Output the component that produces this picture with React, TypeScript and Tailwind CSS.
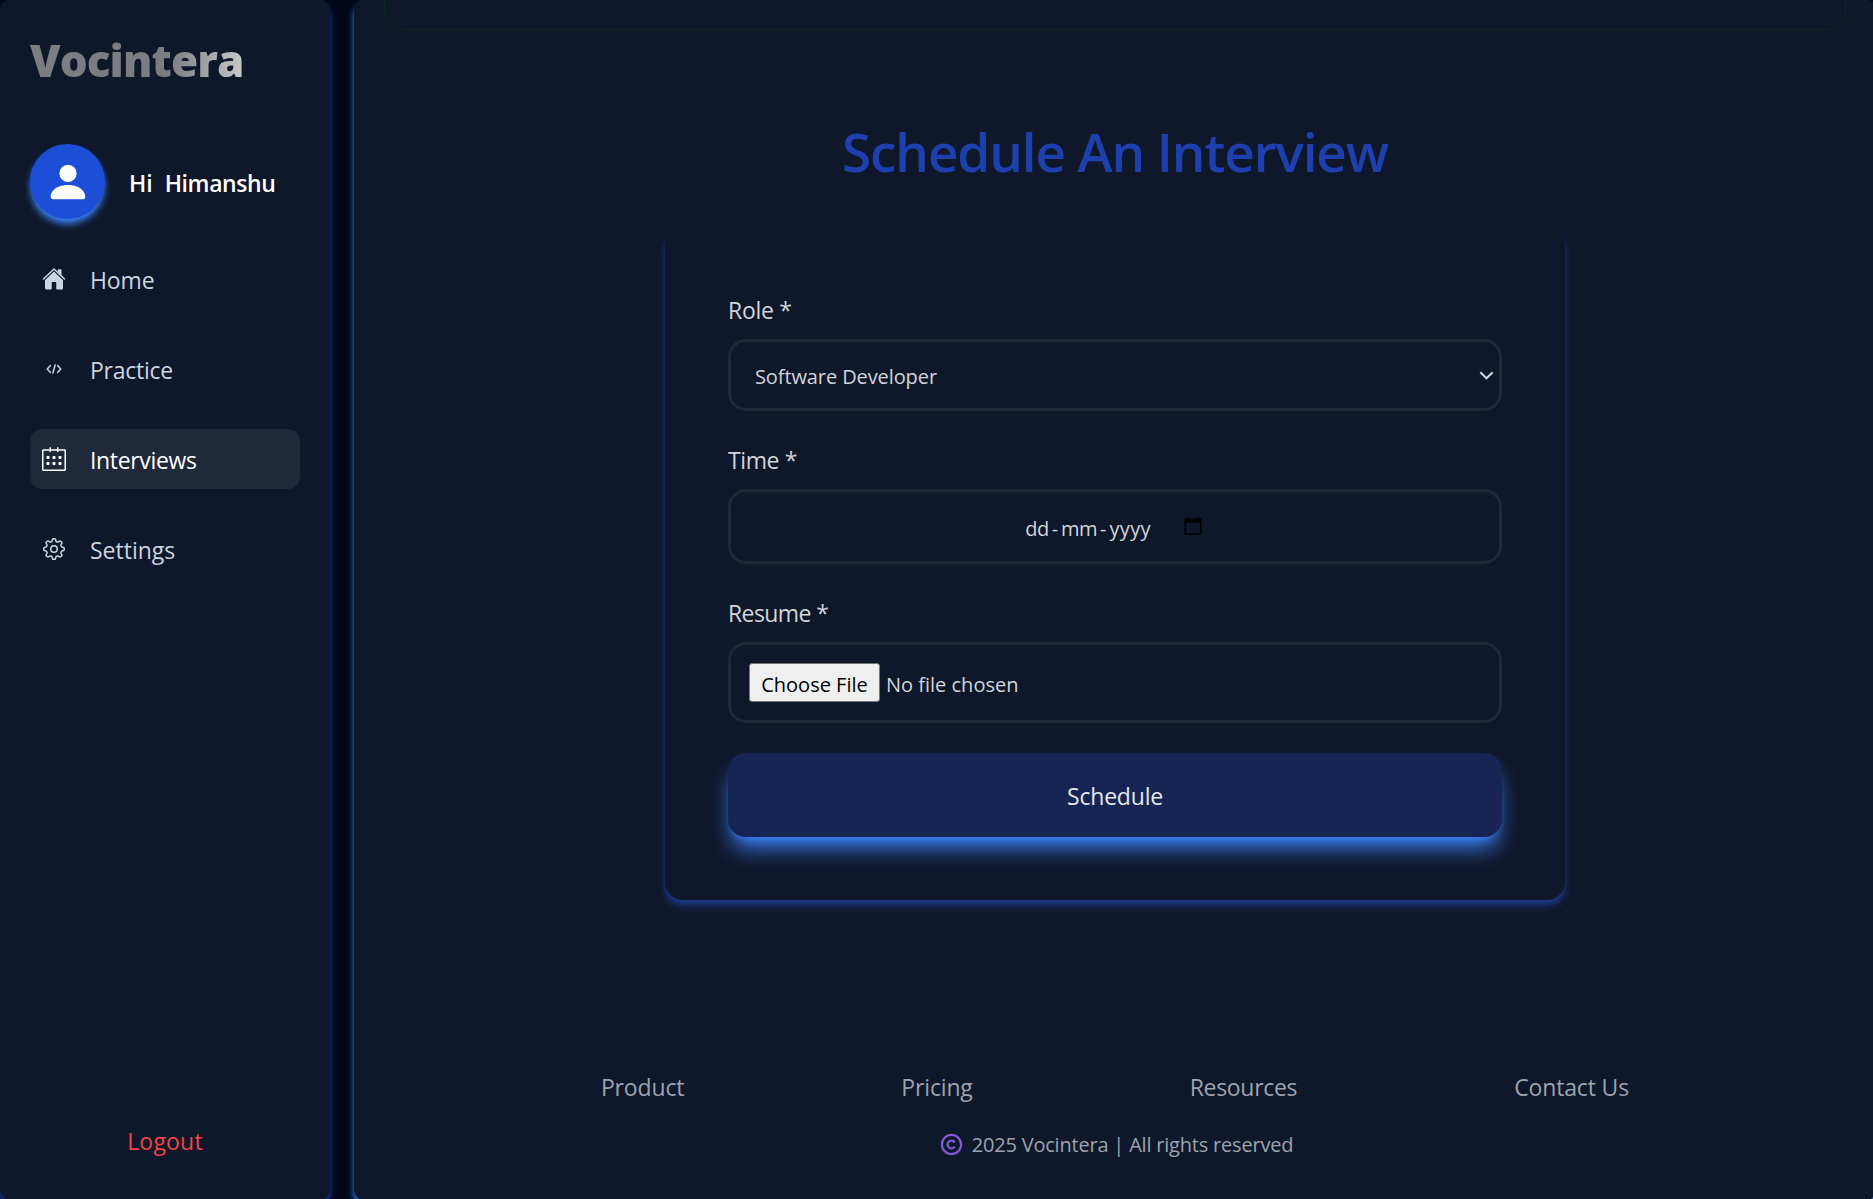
import React from 'react';
import type { ReactNode } from 'react';
import { IoHome } from 'react-icons/io5';
import { GoGear } from 'react-icons/go';
import { BsPersonFill } from 'react-icons/bs';
import { SlCalender } from 'react-icons/sl';
import { LuCopyright } from 'react-icons/lu';

function CodeIcon() {
  return (
    <svg width="24" height="24" viewBox="0 0 24 24" fill="none" stroke="currentColor" strokeWidth="1.5" strokeLinecap="round" strokeLinejoin="round">
      <path d="M8.4 8.6 5.3 12l3.1 3.4M15.6 8.6l3.1 3.4-3.1 3.4M13.2 8l-2.4 8" />
    </svg>
  );
}

function DateIcon() {
  return (
    <svg width="20" height="21" viewBox="0 0 20 21" fill="none" stroke="#000" strokeWidth="1.6">
      <path d="M2.3 3.4h15.4v14.9H2.3z" strokeLinejoin="round" />
      <path d="M2 5h16" strokeWidth="3.6" />
      <path d="M5 1v3M15 1v3" />
    </svg>
  );
}

function NavItem({ icon, label, active, tracking = '' }: { icon: ReactNode; label: string; active?: boolean; tracking?: string }) {
  return (
    <a className={`flex h-[60px] items-center rounded-xl pl-3 ${active ? 'bg-[#1f293a] text-white' : 'text-[#cbd5e1]'}`}>
      <span className="flex w-6 justify-center">{icon}</span>
      <span className={`ml-6 pt-0.5 text-[23px] leading-9 ${tracking}`}>{label}</span>
    </a>
  );
}

function Field({ label, className, tracking = '', children }: { label: string; className: string; tracking?: string; children: ReactNode }) {
  return (
    <div className="mb-[30px]">
      <div className={`mb-3 h-9 pt-px text-[23px] leading-9 ${tracking}`}>{label}</div>
      <div className={`flex items-center rounded-[18px] border-[3px] border-[#1f2937] text-[20px] leading-[30px] ${className}`}>{children}</div>
    </div>
  );
}

export default function App() {
  return (
    <div className="h-[1199px] w-full overflow-hidden bg-[#020617] font-['Open_Sans','Noto_Sans',sans-serif]">
      <div className="-mt-px flex h-[1202px] gap-6">
        <aside className="flex w-[330px] shrink-0 flex-col rounded-xl bg-[#0f172a] px-[30px] pb-[31px] shadow-[0_6px_9px_-1.5px_#1e40af,0_3px_6px_-3px_#1e40af]">
          <div className="mt-[31px] h-[60px]">
            <span className="inline-block bg-linear-to-r from-[#7b7d83] from-65% to-[#c8c8c8] bg-clip-text text-[44px] leading-[60px] font-black tracking-[-0.9px] text-transparent">
              Vocintera
            </span>
          </div>
          <div className="mt-[54px] flex items-center">
            <div className="flex size-[75px] items-center justify-center rounded-full bg-[#1d4ed8] text-white shadow-[0_6px_9px_-1.5px_#3b82f6,0_3px_6px_-3px_#3b82f6]">
              <BsPersonFill size={46} />
            </div>
            <div className="ml-6 flex gap-3 pt-0.5 text-[23px] leading-9 font-semibold text-white">
              <span>Hi</span>
              <span className="tracking-[-0.4px]">Himanshu</span>
            </div>
          </div>
          <nav className="mt-[30px] flex flex-col gap-[30px]">
            <NavItem icon={<IoHome size={24} />} label="Home" tracking="tracking-[-0.1px]" />
            <NavItem icon={<CodeIcon />} label="Practice" tracking="tracking-[-0.25px]" />
            <NavItem icon={<SlCalender size={24} />} label="Interviews" active tracking="tracking-[-0.35px]" />
            <NavItem icon={<GoGear size={24} />} label="Settings" />
          </nav>
          <a className="mt-auto mb-[11px] text-center text-[23px] leading-9 tracking-[0.2px] text-[#ef4444]">Logout</a>
        </aside>

        <main className="flex w-[1522px] shrink-0 flex-col rounded-xl bg-[#0f172a] px-[30px] shadow-[0_6px_9px_-1.5px_#3b82f6,0_3px_6px_-3px_#3b82f6]">
          <div className="h-[31px] shrink-0 rounded-b-[18px] border border-t-0 border-[#072a1c]" />
          <h1 className="mt-[92px] text-center text-[53px] leading-[60px] font-semibold tracking-[-1.1px] text-[#1e40af]">Schedule An Interview</h1>

          <form className="mx-auto mt-[46px] w-[900px] rounded-[18px] bg-[#0f172a] p-[63px] text-[#d1d5db] shadow-[0_6px_9px_-1.5px_#1e3a8a,0_3px_6px_-3px_#1e40af]">
            <Field label="Role *" className="h-[72px] justify-between pr-[5px] pl-6" tracking="tracking-[-0.3px]">
              <span className="pt-[3px] tracking-[-0.1px]">Software Developer</span>
              <svg width="15" height="9" viewBox="0 0 15 9" fill="none" stroke="currentColor" strokeWidth="2">
                <path d="M1.3 1.2 7.5 7.3l6.2-6.1" />
              </svg>
            </Field>
            <Field label="Time *" className="h-[75px] justify-center" tracking="tracking-[-0.4px]">
              <div className="flex items-center gap-[3px] pr-0.5">
                <span className="flex gap-[3px] pt-1">
                  <span className="tracking-[-0.5px]">dd</span>
                  <span>-</span>
                  <span className="tracking-[-0.5px]">mm</span>
                  <span>-</span>
                  <span className="tracking-[0.3px]">yyyy</span>
                </span>
                <span className="ml-[29px]">
                  <DateIcon />
                </span>
              </div>
            </Field>
            <Field label="Resume *" className="h-[81px] pl-[18px]" tracking="tracking-[-0.6px]">
              <button type="button" className="h-[39px] w-[131px] rounded-[3px] border border-[#767676] bg-[#efefef] pt-[3px] leading-[35px] text-black">
                Choose File
              </button>
              <span className="ml-1.5 pt-1">No file chosen</span>
            </Field>
            <button
              type="button"
              className="h-[84px] w-full rounded-[18px] bg-[#172554] pt-0.5 text-[23px] leading-9 tracking-[-0.2px] text-[#e5e7eb] shadow-[0_15px_22.5px_-4.5px_#3b82f6,0_6px_9px_-6px_#3b82f6]"
            >
              Schedule
            </button>
          </form>

          <footer className="mt-[169px] text-[#9ca3af]">
            <div className="flex justify-evenly text-[23px] leading-9 tracking-[-0.15px]">
              <a>Product</a>
              <a>Pricing</a>
              <a className="tracking-[-0.3px]">Resources</a>
              <a>Contact Us</a>
            </div>
            <div className="mt-6 flex items-center justify-center gap-[9px] pt-px pl-[3px] text-[20px] leading-[30px] tracking-[-0.2px]">
              <LuCopyright size={23} strokeWidth={2.4} className="-mt-px text-[#805ad5]" />
              <span>2025 Vocintera | All rights reserved</span>
            </div>
          </footer>
        </main>
      </div>
    </div>
  );
}
